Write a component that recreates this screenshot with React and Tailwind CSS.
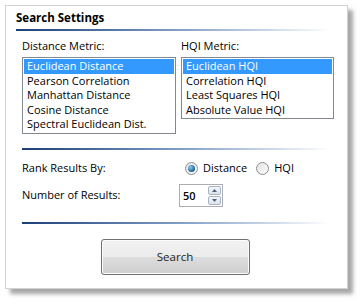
import React, { useState } from 'react';

const distanceItems = [
  'Euclidean Distance',
  'Pearson Correlation',
  'Manhattan Distance',
  'Cosine Distance',
  'Spectral Euclidean Dist.',
];

const hqiItems = ['Euclidean HQI', 'Correlation HQI', 'Least Squares HQI', 'Absolute Value HQI'];

function ListBox({ items, selected, onSelect, className }) {
  return (
    <div className={`overflow-hidden border border-[#828790] bg-white p-[1px] ${className}`}>
      {items.map((item, i) => (
        <div
          key={item}
          onClick={() => onSelect(i)}
          className={`h-[14.5px] pl-[3px] leading-[14.5px] whitespace-nowrap cursor-default ${
            i === selected ? 'bg-[#3399ff] text-white' : 'text-black'
          }`}
        >
          {item}
        </div>
      ))}
    </div>
  );
}

function Radio({ checked, label, onClick }) {
  return (
    <label onClick={onClick} className="flex items-center gap-[5px] cursor-default">
      <span className="flex h-[13px] w-[13px] items-center justify-center rounded-full border border-[#8e8f8f] bg-gradient-to-br from-[#e4e4e4] to-[#fafafa]">
        {checked && (
          <span className="h-[7px] w-[7px] rounded-full bg-[radial-gradient(circle_at_35%_35%,#8ad0f5,#1d5c8a_70%,#0f2f4a)]" />
        )}
      </span>
      <span>{label}</span>
    </label>
  );
}

function Separator({ className }) {
  return <div className={`h-[2px] bg-gradient-to-r from-[#1b3f78] via-[#7f9cc4] to-white ${className}`} />;
}

export default function App() {
  const [dist, setDist] = useState(0);
  const [hqi, setHqi] = useState(0);
  const [rank, setRank] = useState('distance');
  const [count, setCount] = useState(50);

  return (
    <div
      className="h-[305px] w-[362px] bg-white pl-[5px] pt-[5px] text-[11px] text-black"
      style={{ fontFamily: '"Open Sans", sans-serif' }}
    >
      <div className="h-[284px] w-[343px] border border-[#d3d3d3] bg-white shadow-[5px_5px_4px_rgba(0,0,0,0.35)]">
        <div className="px-[10px] pt-[4px]">
          <div className="text-[11.5px] font-bold leading-[16px] text-black">Search Settings</div>
          <Separator className="mt-[3px] w-[315px]" />
        </div>

        <div className="pl-[16px] pr-[12px]">
          <div className="mt-[7px] flex">
            <div className="w-[159px]">
              <div className="leading-[15px]">Distance Metric:</div>
              <ListBox
                items={distanceItems}
                selected={dist}
                onSelect={setDist}
                className="mt-[4px] h-[77px] w-[154px]"
              />
            </div>
            <div className="w-[154px]">
              <div className="leading-[15px]">HQI Metric:</div>
              <ListBox
                items={hqiItems}
                selected={hqi}
                onSelect={setHqi}
                className="mt-[4px] h-[62px] w-[153px]"
              />
            </div>
          </div>

          <Separator className="mt-[14px] w-[309px]" />

          <div className="mt-[10px] flex items-center leading-[16px]">
            <div className="w-[163px]">Rank Results By:</div>
            <div className="flex items-center gap-[9px]">
              <Radio checked={rank === 'distance'} label="Distance" onClick={() => setRank('distance')} />
              <Radio checked={rank === 'hqi'} label="HQI" onClick={() => setRank('hqi')} />
            </div>
          </div>

          <div className="mt-[8px] flex items-center">
            <div className="w-[157px]">Number of Results:</div>
            <div className="flex h-[23px] w-[44px] items-center border border-[#abadb3] bg-white">
              <span className="flex-1 pl-[3px] font-semibold leading-none">{count}</span>
              <div className="mr-[1px] flex h-[19px] w-[13px] flex-col gap-[1px]">
                <button
                  onClick={() => setCount(count + 1)}
                  className="flex flex-1 items-center justify-center rounded-[2px] border border-[#a8b4c4] bg-gradient-to-b from-[#f4f6f9] to-[#dde3ea]"
                >
                  <svg width="5" height="3" viewBox="0 0 5 3">
                    <path d="M0 3L2.5 0L5 3Z" fill="#4d6185" />
                  </svg>
                </button>
                <button
                  onClick={() => setCount(Math.max(0, count - 1))}
                  className="flex flex-1 items-center justify-center rounded-[2px] border border-[#a8b4c4] bg-gradient-to-b from-[#f4f6f9] to-[#dde3ea]"
                >
                  <svg width="5" height="3" viewBox="0 0 5 3">
                    <path d="M0 0L2.5 3L5 0Z" fill="#4d6185" />
                  </svg>
                </button>
              </div>
            </div>
          </div>

          <Separator className="mt-[15px] w-[309px]" />
        </div>

        <div className="mt-[15px] flex justify-center pr-[3px]">
          <button className="h-[36px] w-[149px] rounded-[3px] border border-[#707070] bg-[linear-gradient(to_bottom,#f2f2f2_0%,#ebebeb_50%,#dddddd_51%,#cfcfcf_100%)] text-[11.5px] text-[#1e1e1e] shadow-[inset_0_0_0_1px_#fcfcfc]">
            Search
          </button>
        </div>
      </div>
    </div>
  );
}
